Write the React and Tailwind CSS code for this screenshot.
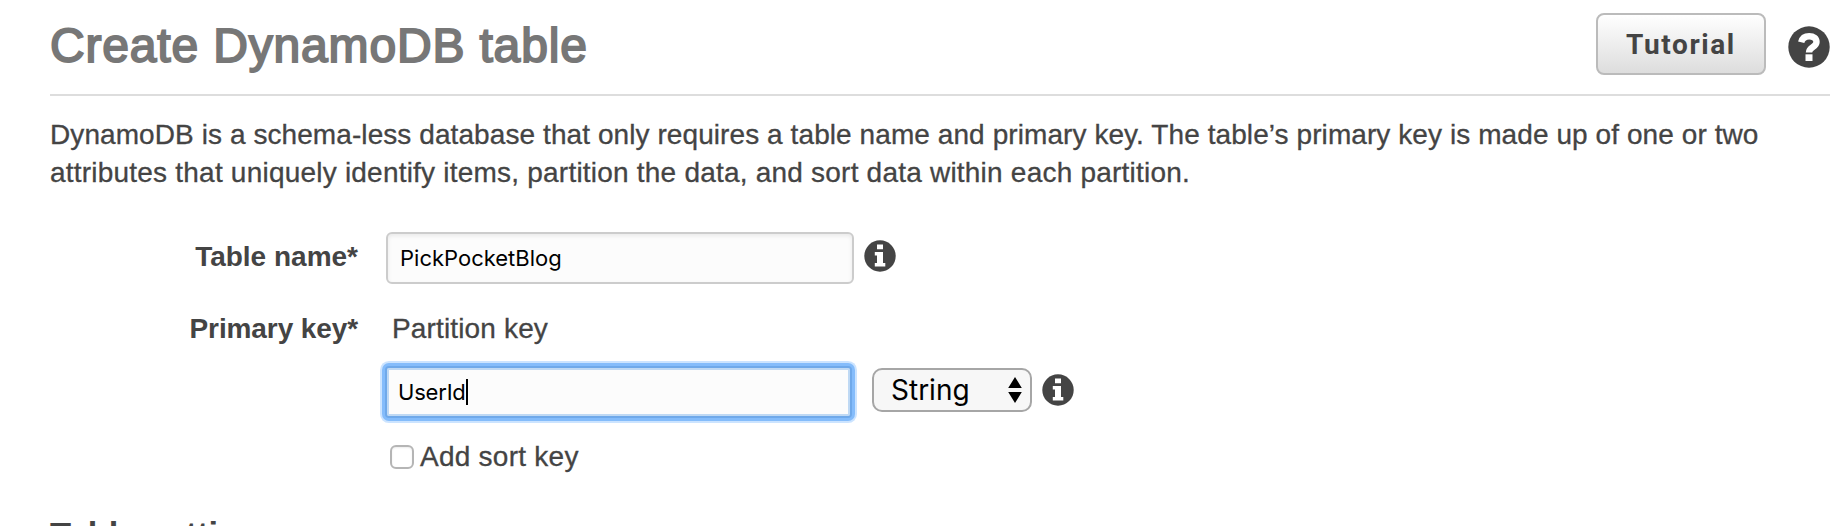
function InfoIcon() {
  return (
    <svg viewBox="0 0 32 32" className="size-8 shrink-0">
      <circle cx="16" cy="16" r="15.7" fill="#444" />
      <path fill="#fff" d="M13 4.500h6v4.800h-6zM10.800 12h8.200v11h2.300v3.600H10.800V23H13v-7.400h-2.200z" />
    </svg>
  );
}

function QuestionIcon() {
  return (
    <svg viewBox="0 0 42 42" className="size-[42px] shrink-0">
      <circle cx="21" cy="21" r="20.7" fill="#444" />
      <path fill="#fff" d="M17.500 28.300h7V35h-7z" />
      <path fill="none" stroke="#fff" strokeWidth="6.400" d="M13.200 16.200c1-4.200 4-6 8-6 4.600 0 7.300 2.300 7.300 5.700 0 5.300-7.500 5.100-7.500 10.500" />
    </svg>
  );
}

export default function App() {
  return (
    <main className="h-[526px] w-[1848px] overflow-hidden bg-white pl-[50px] pr-[18px] font-['Liberation_Sans',Arial,sans-serif] text-[28px] whitespace-nowrap text-[#444]">
      <header className="flex h-24 items-start border-b-2 border-[#ddd]">
        <h1 className="mt-[18px] text-[48px] leading-[56px] tracking-[0.83px] text-[#777] [-webkit-text-stroke:1.9px_#777]">Create DynamoDB table</h1>
        <button className="mt-[13px] ml-auto flex h-[62px] w-[170px] items-center justify-center rounded-lg border-2 border-[#bbb] bg-linear-to-b from-white to-[#ddd] pt-[2px] font-[Roboto,sans-serif] text-[28px] font-bold tracking-[1.6px]">
          Tutorial
        </button>
        <div className="mt-[26px] ml-[22px]"><QuestionIcon /></div>
      </header>
      <p className="mt-[20px] leading-[38px] [-webkit-text-stroke:0.3px_#444]">
        <span className="tracking-[0.08px]">DynamoDB is a schema-less database that only requires a table name and primary key. The table’s primary key is made up of one or two</span><br />
        <span className="tracking-[0.215px]">attributes that uniquely identify items, partition the data, and sort data within each partition.</span>
      </p>
      <div className="mt-[40px] flex h-[52px]">
        <label className="w-[308px] pt-[5px] text-right leading-[40px] font-bold">Table name*</label>
        <div className="ml-7 flex w-[468px] items-center rounded-md border-2 border-[#ccc] bg-[#fcfcfc] pl-[12px] font-[Inter,sans-serif] text-[22px] text-black shadow-[inset_0_2px_4px_rgba(0,0,0,0.08)]">PickPocketBlog</div>
        <div className="mt-2 ml-[10px]"><InfoIcon /></div>
      </div>
      <div className="mt-[25px] flex h-[40px] leading-[40px]">
        <label className="w-[308px] text-right font-bold tracking-[-0.1px]">Primary key*</label>
        <span className="ml-[34px] tracking-[0.15px] [-webkit-text-stroke:0.3px_#444]">Partition key</span>
      </div>
      <div className="mt-[17px] ml-[335px] flex h-[52px]">
        <div className="flex h-[52px] w-[467px] items-center rounded-sm border-2 border-[#6fa9ea] bg-[#fcfcfc] pl-[11px] font-[Inter,sans-serif] text-[22px] tracking-[-0.2px] text-black shadow-[0_0_0_3px_#84bcfb,0_0_0_5px_#cce4ff,inset_0_0_0_2px_#bfd9f4]">
          UserId<span className="h-[26px] w-[2px] bg-black" />
        </div>
        <div className="mt-[2px] ml-5 flex h-11 w-40 items-center justify-between rounded-[10px] border-2 border-[#a6a6a6] bg-[#f7f7f7] pr-2 pl-[17px] font-[Inter,sans-serif] text-[28px] text-black">
          <span>String</span>
          <svg viewBox="0 0 14 26" className="h-[26px] w-[14px]"><path d="M7 0l6.800 11H.200zM7 26l6.800-11H.200z" /></svg>
        </div>
        <div className="mt-[8px] ml-[10px]"><InfoIcon /></div>
      </div>
      <div className="mt-[19px] ml-[340px] flex h-[40px] items-center leading-[40px]">
        <span className="size-6 rounded-md border-2 border-[#b5b5b5] bg-white shadow-[inset_0_1px_2px_rgba(0,0,0,0.08)]" />
        <span className="ml-[6px] tracking-[0.25px] [-webkit-text-stroke:0.3px_#444]">Add sort key</span>
      </div>
      <h2 className="mt-[38px] text-[34.5px] leading-[40px] font-bold">Table settings</h2>
    </main>
  );
}
